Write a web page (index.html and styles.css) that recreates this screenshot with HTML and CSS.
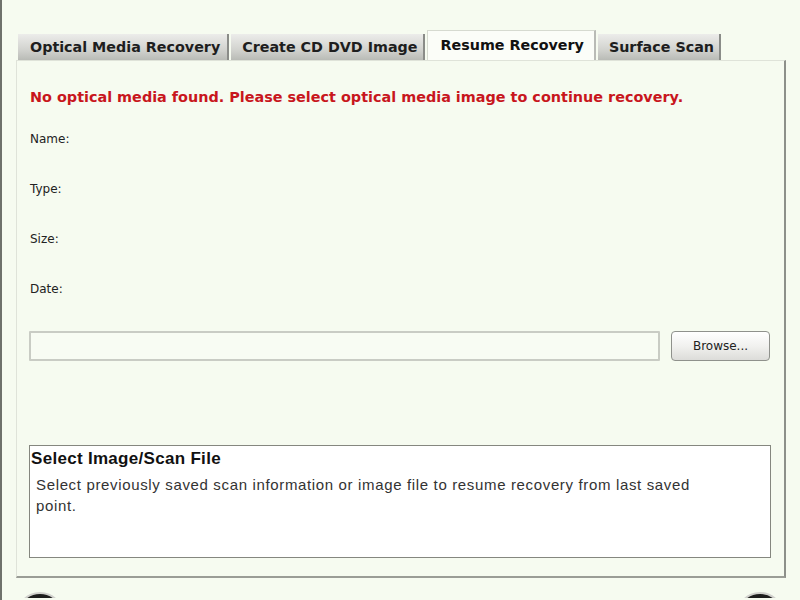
FILE: index.html
```html
<!DOCTYPE html>
<html lang="en">
<head>
    <meta charset="UTF-8">
    <title>Resume Recovery</title>
    <link rel="stylesheet" href="styles.css">
</head>
<body>
    <div class="frame">
        <div class="tabs">
            <div class="tab">Optical Media Recovery</div>
            <div class="tab">Create CD DVD Image</div>
            <div class="tab active">Resume Recovery</div>
            <div class="tab">Surface Scan</div>
        </div>

        <div class="panel">
            <p class="alert">No optical media found. Please select optical media image to continue recovery.</p>

            <div class="fields">
                <div class="field">Name:</div>
                <div class="field">Type:</div>
                <div class="field">Size:</div>
                <div class="field">Date:</div>
            </div>

            <div class="file-row">
                <input type="text" class="file-input">
                <button class="browse-button">Browse...</button>
            </div>

            <div class="info-box">
                <div class="info-title">Select Image/Scan File</div>
                <p class="info-text">Select previously saved scan information or image file to resume recovery from last saved point.</p>
            </div>
        </div>

        <div class="nav-row">
            <div class="nav-button"></div>
            <div class="nav-button"></div>
        </div>
    </div>
</body>
</html>
```

FILE: styles.css
```css
html, body {
    margin: 0;
    padding: 0;
    height: 100%;
    overflow: hidden;
}

body {
    background-color: #f6fbf0;
    font-family: 'DejaVu Sans', Verdana, sans-serif;
    color: #222;
}

.frame {
    height: 100%;
    border-left: 2px solid #6f726c;
    padding: 30px 0 0 14px;
    box-sizing: border-box;
}

.tabs {
    display: flex;
    align-items: flex-end;
    gap: 2px;
    padding-left: 2px;
    height: 30px;
}

.tab {
    height: 26px;
    line-height: 26px;
    padding: 0 5px 0 11px;
    font-size: 14.3px;
    font-weight: bold;
    color: #1e1e1e;
    background: linear-gradient(#ececea, #d2d3cf 60%, #b9bbb6);
    border-right: 2px solid #8a8c88;
    box-sizing: border-box;
    white-space: nowrap;
}

.tab:first-child {
    padding: 0 7px 0 12px;
}

.tab.active {
    height: 30px;
    line-height: 28px;
    padding: 0 10px 0 13px;
    background: #fbfdf8;
    border: 1px solid #d6dad0;
    border-bottom: none;
    border-right: 2px solid #b9bbb6;
    color: #111;
}

.panel {
    width: 770px;
    height: 518px;
    border-top: 1px solid #dfe3d9;
    border-left: 1px solid #dfe3d9;
    border-right: 2px solid #8d908a;
    border-bottom: 2px solid #9a9d96;
    padding: 26px 12px 0 13px;
    box-sizing: border-box;
}

.alert {
    margin: 0;
    font-size: 14.4px;
    font-weight: bold;
    color: #c8161d;
    height: 20px;
    line-height: 20px;
}

.fields {
    margin-top: 25px;
}

.field {
    font-size: 12px;
    height: 50px;
    line-height: 14px;
    color: #222;
}

.file-row {
    display: flex;
    align-items: center;
    gap: 11px;
    margin-left: -1px;
    margin-top: -1px;
}

.file-input {
    width: 631px;
    height: 30px;
    margin: 0;
    border: 2px solid #c9ccc4;
    border-radius: 1px;
    background: #f8fcf3;
    box-sizing: border-box;
}

.browse-button {
    width: 99px;
    height: 30px;
    font-family: 'DejaVu Sans', Verdana, sans-serif;
    font-size: 12px;
    color: #222;
    background: linear-gradient(#ffffff, #f1f1ef 50%, #dcdcd9);
    border: 1px solid #8f918c;
    border-radius: 4px;
    cursor: pointer;
}

.info-box {
    margin-top: 84px;
    margin-left: -1px;
    width: 742px;
    height: 113px;
    background: #fff;
    border: 1px solid #85877f;
    box-sizing: border-box;
    padding: 2px 0 0 1px;
}

.info-title {
    font-family: 'Liberation Sans', Arial, sans-serif;
    font-size: 17px;
    font-weight: bold;
    letter-spacing: 0.3px;
    color: #111;
    line-height: 22px;
}

.info-text {
    margin: 4px 0 0 5px;
    width: 680px;
    font-family: 'Liberation Sans', Arial, sans-serif;
    font-size: 15px;
    letter-spacing: 0.65px;
    line-height: 21px;
    color: #333;
}

.nav-row {
    display: flex;
    justify-content: space-between;
    width: 764px;
    height: 4px;
    overflow: hidden;
    margin-top: 14px;
    padding: 2px 0 0 2px;
}

.nav-button {
    flex: none;
    width: 44px;
    height: 44px;
    border-radius: 50%;
    border: 4px solid #1d1d1d;
    background: #e8e8e6;
    box-shadow: 0 0 0 2px #d0d0cc;
    box-sizing: border-box;
}
```
